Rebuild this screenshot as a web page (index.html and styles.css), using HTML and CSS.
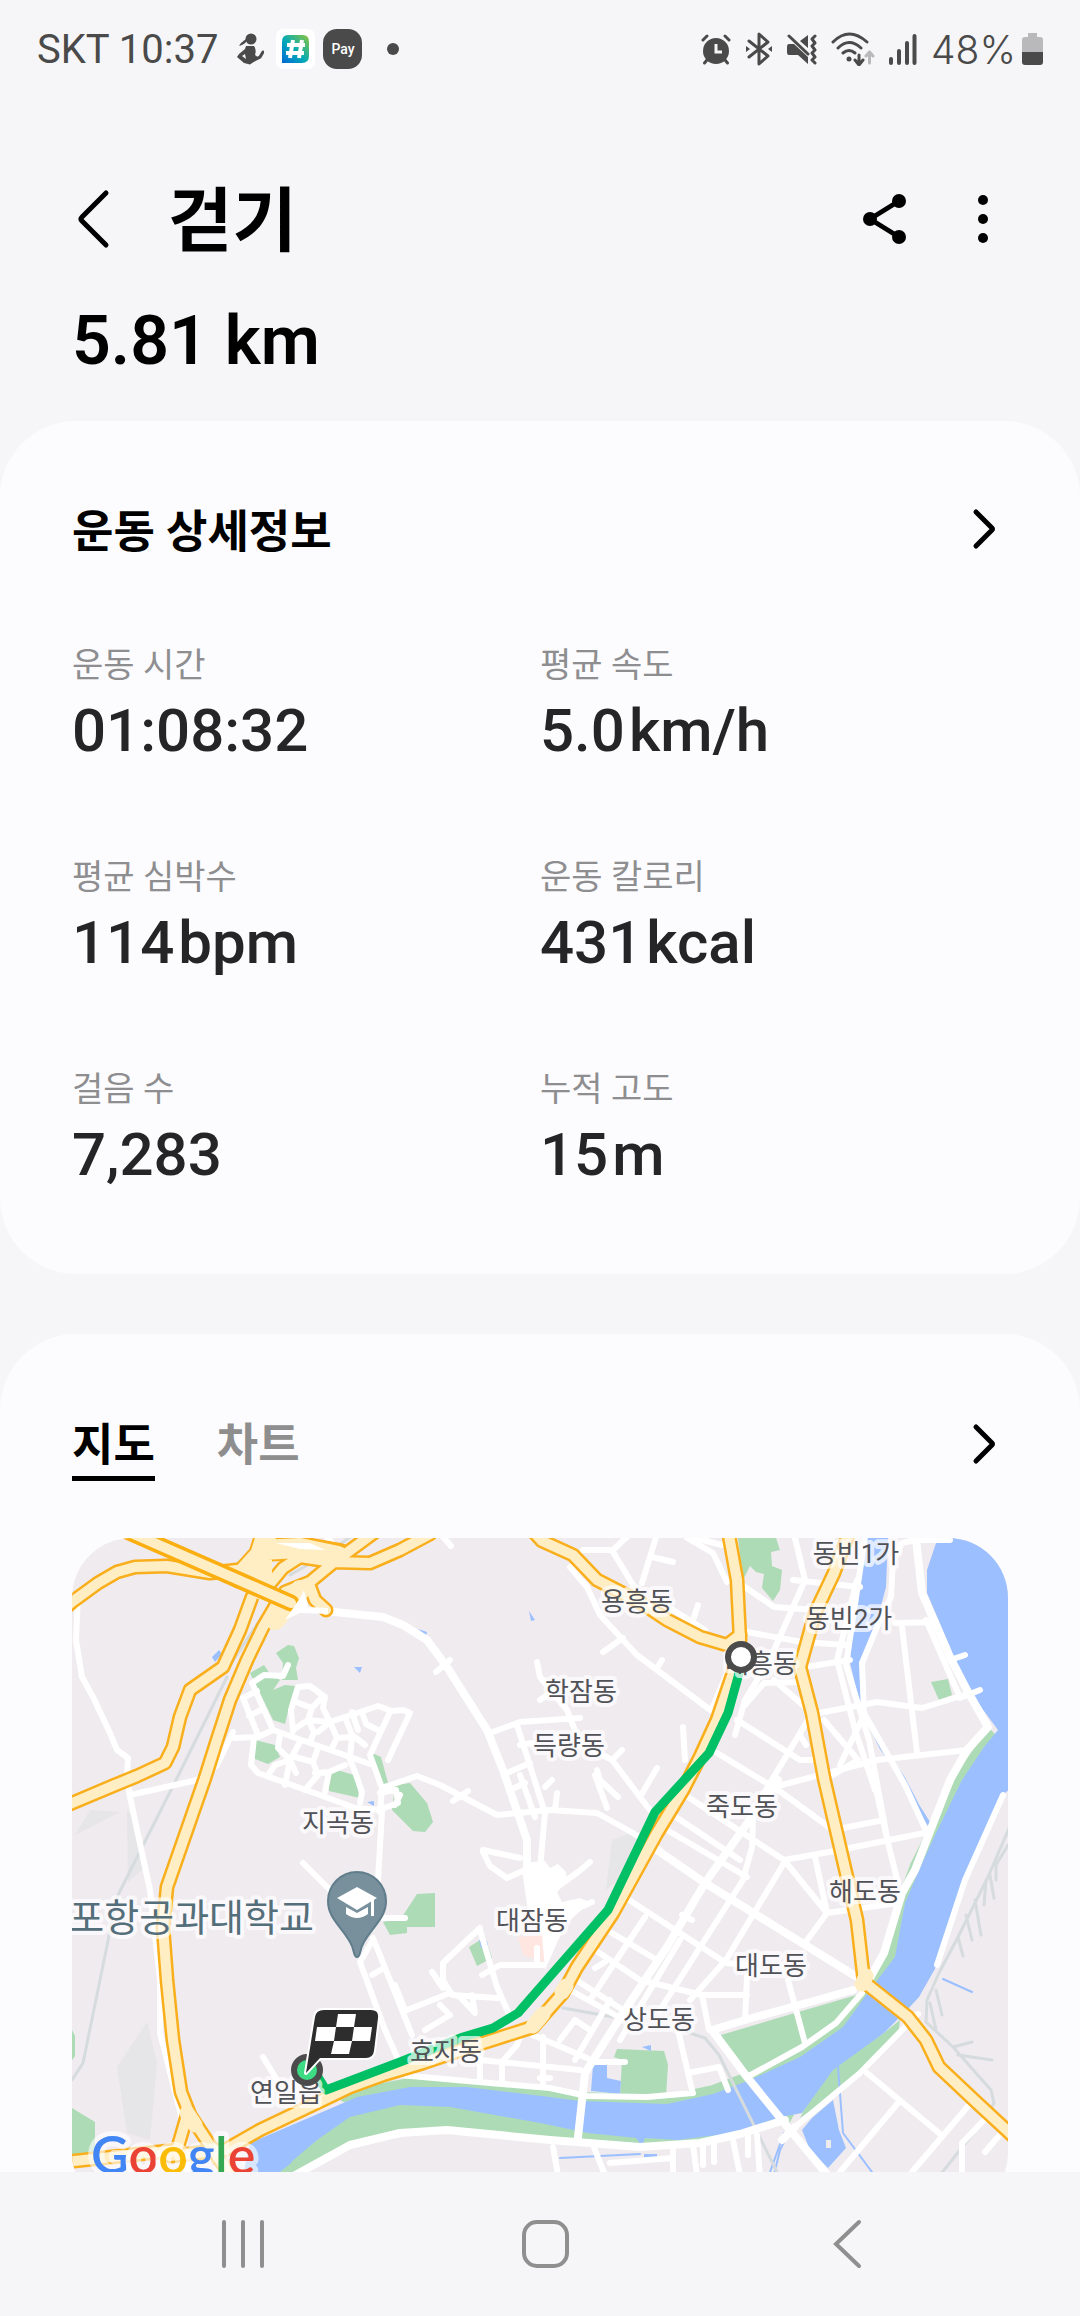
FILE: index.html
```html
<!DOCTYPE html>
<html lang="ko">
<head>
    <meta charset="UTF-8">
    <meta name="viewport" content="width=device-width, initial-scale=1.0">
    <title>걷기</title>
    <link rel="stylesheet" href="styles.css">
</head>
<body>
    <div class="status-bar">
        <div class="status-left">
            <span class="carrier">SKT 10:37</span>
            <svg class="icon-dance" width="28" height="32" viewBox="0 0 28 32">
                <circle cx="15" cy="6" r="5.5"/>
                <path d="M12 6C10 10 7 12 3 13C5 9 8 8 11 5Z"/>
                <path d="M10 13H18C20 16 20 19 19 22L23 25L14 31.500L8 30L1 24L3 21L9 16Z"/>
                <path class="dance-arm" d="M16 28L24 24L27 19"/>
                <path class="dance-gap" d="M6 23L9 21L10 26Z"/>
            </svg>
            <svg class="icon-hash" width="39" height="40" viewBox="0 0 39 40">
                <defs>
                    <linearGradient id="hashColor" x1="0" y1="1" x2="1" y2="0">
                        <stop offset="0" stop-color="#0068d6"/>
                        <stop offset="0.45" stop-color="#00a9b8"/>
                        <stop offset="1" stop-color="#8cc63f"/>
                    </linearGradient>
                </defs>
                <rect width="39" height="40" rx="7" fill="#fff"/>
                <path d="M12 6H27Q33 6 33 13V27Q33 34 26 34H6V13Q6 6 12 6Z" fill="url(#hashColor)"/>
                <path d="M17 11L14 29M26 11L23 29M11 16H29M10 24H28" fill="none" stroke="#fff" stroke-width="4"/>
            </svg>
            <span class="pay-badge">Pay</span>
            <span class="more-dot"></span>
        </div>
        <div class="status-right">
            <svg width="30" height="32" viewBox="0 0 30 32">
                <circle cx="15" cy="18" r="13"/>
                <path class="line" d="M2 7L6 3M28 7L24 3M6 27L3.500 30M24 27L26.500 30"/>
                <path d="M15 11V19H21" fill="none" stroke="#f6f6f8" stroke-width="3"/>
            </svg>
            <svg width="28" height="34" viewBox="0 0 28 34">
                <path class="line" d="M4 9L23 24L14 32V2L23 10L4 25"/>
                <path d="M1 14L5 17L1 20ZM27 14L23 17L27 20Z"/>
            </svg>
            <svg width="30" height="32" viewBox="0 0 30 32">
                <path d="M2 11H7L21 24V31L11 22H2Q0 22 0 19V14Q0 11 2 11ZM13 8L21 2V15Z"/>
                <path class="line" d="M2 3L21 21"/>
                <path class="line" d="M28 3L25 6L28 10L25 13L28 17L25 20L28 24L25 27L28 30"/>
            </svg>
            <svg width="44" height="34" viewBox="0 0 44 34">
                <path class="line" d="M2 10Q18 -6 36 10M7 16Q18 5 30 16M12 21Q18 16 24 21"/>
                <circle cx="18" cy="27" r="2.500"/>
                <path class="line" d="M28 23V32M24 28L28 33L32 28"/>
                <path class="line faint" d="M38.500 31V20M35 24L38.500 20L42 24"/>
            </svg>
            <svg width="28" height="32" viewBox="0 0 28 32">
                <path d="M2 26V30M10 18V30M18 10V30M25.500 3V30" fill="none" stroke="#4a4a4a" stroke-width="4" stroke-linecap="round"/>
            </svg>
            <span class="battery-text">48%</span>
            <svg width="21" height="32" viewBox="0 0 21 32">
                <path class="battery-empty" d="M6 0H15V4H18Q21 4 21 7V20H0V7Q0 4 3 4H6Z"/>
                <path d="M0 19H21V29Q21 32 18 32H3Q0 32 0 29Z"/>
            </svg>
        </div>
    </div>

    <main>
        <header>
            <button class="icon-button" aria-label="뒤로">
                <svg width="60" height="60" viewBox="0 0 60 60"><path class="stroke" d="M42 4L18 28Q16 30 18 32L42 56"/></svg>
            </button>
            <h1>걷기</h1>
            <button class="icon-button" aria-label="공유">
                <svg width="60" height="60" viewBox="0 0 60 60">
                    <path class="stroke" d="M44 12L15 30L44 48"/>
                    <circle cx="15" cy="30" r="7"/>
                    <circle cx="44" cy="12" r="7"/>
                    <circle cx="44" cy="48" r="7"/>
                </svg>
            </button>
            <button class="icon-button" aria-label="더보기">
                <svg width="60" height="60" viewBox="0 0 60 60">
                    <circle cx="30" cy="11" r="5"/>
                    <circle cx="30" cy="30" r="5"/>
                    <circle cx="30" cy="49" r="5"/>
                </svg>
            </button>
        </header>
        <p class="distance">5.81 km</p>

        <section class="card">
            <div class="card-head">
                <h2>운동 상세정보</h2>
                <button class="icon-button" aria-label="상세정보 보기">
                    <svg width="48" height="48" viewBox="0 0 48 48"><path class="stroke" d="M16 6L32 22Q33 23 32 24L16 40"/></svg>
                </button>
            </div>
            <dl class="stats">
                <div>
                    <dt>운동 시간</dt>
                    <dd>01:08:32</dd>
                </div>
                <div>
                    <dt>평균 속도</dt>
                    <dd>5.0<span class="unit">km/h</span></dd>
                </div>
                <div>
                    <dt>평균 심박수</dt>
                    <dd>114<span class="unit">bpm</span></dd>
                </div>
                <div>
                    <dt>운동 칼로리</dt>
                    <dd>431<span class="unit">kcal</span></dd>
                </div>
                <div>
                    <dt>걸음 수</dt>
                    <dd>7,283</dd>
                </div>
                <div>
                    <dt>누적 고도</dt>
                    <dd>15<span class="unit">m</span></dd>
                </div>
            </dl>
        </section>

        <section class="card map-card">
            <div class="card-head">
                <div class="tabs" role="tablist">
                    <button class="tab active" role="tab" aria-selected="true">지도</button>
                    <button class="tab" role="tab" aria-selected="false">차트</button>
                </div>
                <button class="icon-button" aria-label="지도 보기">
                    <svg width="48" height="48" viewBox="0 0 48 48"><path class="stroke" d="M16 5L32 21Q33 22 32 23L16 39"/></svg>
                </button>
            </div>

            <svg class="map" viewBox="72 1538 936 675" role="img" aria-label="걷기 경로 지도">
                <defs>
                    <g id="highways">
                        <path d="M65 1608L72 1602L98 1583L117 1572L135 1567L167 1566L210 1573L237 1570"/>
                        <path d="M252 1597L240 1630L223 1667L190 1690L180 1717L173 1747L165 1763L137 1776L115 1785L65 1806"/>
                        <path d="M277 1603L263 1627L247 1660L230 1700L217 1740L205 1778L167 1887L163 1927L167 1980L173 2040L181 2092L190 2115L213 2150L240 2190"/>
                        <path d="M188 2112L177 2150L65 2162M170 2156L225 2150L260 2130L323 2100L350 2087L383 2075L423 2063L483 2043L533 2027L563 1993L577 1967L613 1913L657 1833L683 1790L700 1757L717 1720L733 1673L740 1640L737 1580L728 1530"/>
                        <path d="M530 1528L542 1541L573 1555L597 1580L640 1602L667 1620L700 1637L727 1645L740 1635"/>
                        <path d="M850 1530L834 1573L815 1613L800 1667L812 1713L824 1778L840 1847L857 1920L864 1982L908 2017L926 2040L939 2067L974 2100L1015 2138"/>
                        <path d="M263 1592L283 1568L300 1557L333 1562L370 1563L400 1550L430 1534M285 1592L310 1582L333 1563L375 1532M309 1584L315 1600L326 1610"/>
                    </g>
                    <path id="river" d="M240 2190L250 2143L327 2110L357 2097L410 2087L467 2087L550 2097L580 2101L667 2104L713 2094L750 2080L800 2057L843 2027L872 1987L895 1957L905 1903L919 1870L936 1833L962 1780L984 1747L998 1730L981 1707L960 1677L950 1647L927 1593L927 1570L936 1543L942 1530H1015V1785L1005 1793L981 1847L953 1910L936 1967L919 1997L907 2010L884 2033L833 2070L802 2113L781 2117L733 2133L678 2140L645 2138L642 2146L636 2138L588 2133L540 2123L450 2107L400 2105L350 2117L317 2140L290 2163L262 2185Z"/>
                </defs>

                <rect class="land" x="72" y="1538" width="936" height="675"/>

                <!-- bare ground -->
                <path class="ground" d="M147 2022L157 2063L150 2140L127 2133L117 2067ZM612 1840L640 1830L618 1880L606 1890ZM127 1810L137 1820L142 1870L128 1882ZM75 1835L90 1810L120 1812Z"/>
                <path class="hospital" d="M518 1937L543 1935L545 1962L523 1955Z"/>

                <!-- parks -->
                <g class="park">
                    <path d="M721 2035L795 2013L860 1994L840 2020L802 2048L750 2075L723 2043Z"/>
                    <path d="M614 2057L617 2049L664 2051L668 2065L666 2096H620L622 2060Z"/>
                    <path d="M900 2020L898 2036L864 2073L800 2118L809 2100L833 2068L884 2033Z"/>
                    <path d="M738 1538H776L780 1550L771 1552L772 1566L782 1570L780 1590L773 1601L762 1588L764 1574L756 1572L750 1566L743 1580Z"/>
                    <path d="M931 1682L948 1679L952 1695L939 1700Z"/>
                    <path d="M989 1728L996 1735L985 1748L962 1782H950Z"/>
                    <path d="M250 1673L264 1665L270 1674L280 1680L273 1690L285 1685L295 1686L290 1703L285 1724L273 1720L257 1687Z"/>
                    <path d="M276 1653L288 1645L294 1646L299 1658L296 1668L298 1680L282 1680L283 1663Z"/>
                    <path d="M255 1740L275 1745L280 1757L268 1764L255 1759Z"/>
                    <path d="M326 1774L337 1770L354 1775L360 1798L329 1791Z"/>
                    <path d="M372 1753L381 1757L388 1783L382 1784Z"/>
                    <path d="M395 1785L410 1783L427 1803L433 1822L425 1832L413 1831L392 1810Z"/>
                    <path d="M402 1917L417 1894L435 1893V1927H407V1933L390 1935L383 1922Z"/>
                    <path d="M469 1947L485 1937L492 1958L477 1966Z"/>
                    <path d="M72 2108L95 2122V2155L72 2158ZM72 2030L75 2036V2056L72 2060Z"/>
                    <path d="M255 2190L330 2110L450 2100L588 2128L800 2104L790 2122L735 2134L690 2142L640 2147L580 2144L450 2130L400 2134L350 2146L300 2175L270 2195Z"/>
                </g>
                <path class="bank" d="M345 2096L410 2084L467 2084L550 2093L580 2098L667 2101L713 2091L750 2077L800 2053L843 2024L872 1987L893 1950L902 1903L916 1866L934 1830L962 1780"/>

                <!-- water -->
                <use class="water" href="#river"/>
                <g class="water">
                    <path d="M866 1538H888L886 1587L874 1633L862 1660L864 1693L868 1720L862 1712L850 1663L853 1627L860 1580Z"/>
                    <path d="M593 2065H607V2078L621 2081L620 2094L591 2091Z"/>
                    <path d="M833 2100L839 2130L846 2148L828 2168L810 2150L802 2130L812 2118Z"/>
                    <path d="M212 1657L219 1650L222 1654L215 1662ZM354 1667H362L360 1673ZM418 1629L427 1632L426 1636ZM529 1611L535 1620L531 1621ZM367 1802L374 1801V1806ZM642 2047L651 2045V2051ZM644 2154H657V2159H644ZM479 1940L487 1941L488 1947L481 1948Z"/>
                </g>
                <path class="inlet" d="M255 2190L290 2162L270 2160L300 2152"/>
                <rect class="land" x="826" y="2140" width="5" height="8"/>
                <path class="stream" d="M866 1715L881 1747L903 1778L917 1805L929 1824"/>
                <path class="stream thin" d="M838 2067L843 2133L872 2172M790 2130L780 2150L774 2175M784 2133L769 2175M943 1979L972 1992M560 2158L640 2154"/>

                <!-- railways -->
                <path class="rail" d="M687 2032L705 2038L719 2055L780 2178M227 1677L177 1778L117 1897L83 2063L72 2080M563 2008L613 2017M1010 1826L988 1877L958 1937L939 1973L927 2000L926 2022L953 2047L991 2090L994 2103L984 2120L940 2175M1008 1845L996 1865V1880M990 1875L994 1898M986 1880L984 1905M975 1900L981 1935M966 1915L972 1940M958 1937L963 1956M936 1990L942 2015M930 2003L936 2030M953 2047L972 2042M958 2055L992 2060M290 1575L325 1555L360 1530M230 1665L270 1605"/>

                <!-- local streets -->
                <g class="street">
                    <path d="M98 1580L78 1593L76 1640L82 1677L93 1697L110 1733L117 1750L128 1758L127 1777L130 1797L150 1890L160 1980V2033L183 2123L187 2170"/>
                    <path d="M130 1795L197 1780L217 1765L233 1732M235 1738L258 1737L273 1730M243 1698L258 1735M243 1698L257 1691M249 1716L261 1710M252 1683L273 1730L330 1750L370 1764M252 1683L264 1675L283 1676L288 1665"/>
                    <path d="M254 1738L251 1765L258 1773L320 1795L355 1808L382 1810M293 1731L291 1710L298 1687L310 1686L325 1697L323 1708L330 1722L378 1706L392 1711L403 1710L410 1713L388 1760M390 1712L370 1755L382 1788L380 1812"/>
                    <path d="M296 1702L312 1708L323 1696M312 1708L308 1720L296 1728M308 1720L314 1732L310 1742M308 1720L330 1722M318 1732L330 1722L337 1738L331 1750M345 1717L352 1735L365 1745M352 1737L350 1757M352 1712L358 1730M362 1712L366 1724L378 1730M337 1738L352 1737"/>
                    <path d="M280 1735L278 1748L290 1760L285 1785M318 1748L313 1762L318 1775L305 1790M290 1760L296 1773M295 1757L313 1762M268 1775L275 1765L290 1760L300 1742M325 1792L329 1772L345 1765M360 1803L362 1792L355 1772L350 1760M315 1773L329 1772"/>
                    <path d="M382 1788L417 1776L440 1785L463 1797L497 1815L550 1810L597 1813L633 1833L660 1850M453 1801L468 1791M382 1812L378 1880M400 1795L395 1805M380 1793L396 1790L398 1803L384 1808"/>
                    <path d="M303 1863L330 1890M383 1918L405 1918M373 1940L360 1962L385 2030L397 2057M373 1938L412 2035M372 1975L384 1968M407 2010L450 1993L460 1997L475 2013L472 1995M480 1928L443 1963V1980L452 1995L497 1998M480 1930L497 1987L508 2012M432 1972L443 1988M482 1975L500 1965L543 1965M425 2030L450 2015L440 2005M263 2057L277 2080M395 1985L405 2010"/>
                    <path d="M490 1733L520 1722L580 1718M517 1725L545 1813L540 1868M507 1773L530 1763M510 1790L525 1783M520 1775L535 1817M520 1745L532 1743M545 1787L552 1780M555 1810L557 1793M537 1662L540 1677L567 1710L580 1743L612 1760L640 1797L650 1810M597 1770L600 1780L618 1797M595 1775L607 1808M640 1797L657 1768M612 1760L622 1750M540 1700L555 1690"/>
                    <path d="M583 1550L613 1550L630 1534M613 1552L633 1585M657 1534L642 1583M652 1557L673 1562M687 1538L713 1553L727 1582M695 1538L722 1545M570 1567L587 1587L600 1615L637 1655L677 1685L713 1712M603 1652L623 1638M657 1668L662 1660M673 1610L705 1630M698 1605L693 1620M683 1727L685 1760M713 1707L727 1673M437 1530L451 1546M436 1672L450 1660M280 1546L310 1543L340 1552L325 1535"/>
                    <path d="M745 1587L774 1607L815 1610M795 1538L805 1580L771 1657L745 1700L735 1735M793 1580L860 1587M747 1632L802 1642L846 1645M866 1530L846 1665L869 1740L888 1843L898 1883M857 1580L837 1660L855 1730L875 1790M950 1540L915 1540L902 1543L893 1560L891 1597L877 1627L862 1663L864 1713L905 1785L928 1835"/>
                    <path d="M895 1623L936 1622M926 1620L958 1693M902 1627L917 1753M819 1713L877 1702L922 1708L964 1695M967 1750L877 1760L774 1787M805 1667L850 1660M800 1682L764 1683L745 1705M774 1680L812 1713M737 1720L800 1760L812 1760M717 1753L773 1787M812 1713L760 1800M824 1720L858 1760L833 1775M864 1715L840 1765M800 1735L806 1745"/>
                    <path d="M688 1797L784 1860L827 1913L805 1943M667 1830L747 1877M676 1817L740 1860M784 1860L840 1850L929 1832M774 1787L833 1830L884 1820M874 1780L888 1843M815 1857L827 1913L898 1903M784 1863L726 1960L690 2000M753 1817L752 1847L743 1880L660 2010M626 1898L726 1963L747 1965M607 1930L657 1960M595 1950L640 1980L702 1995H747M576 1980L623 2010M570 1990L615 2015M645 1917L590 2000M680 1940L620 2040M682 1915L692 1920M595 1968L605 1962M747 1977L745 2020M702 1995L709 2030M788 1980L805 2043"/>
                    <path d="M747 2077L802 2047L836 2023L862 1993M678 2030L692 2090M688 2073L719 2067L728 2090M400 2075L467 2081L550 2088L587 2096L647 2097L693 2093M795 2127L860 2073L905 2027M867 2073L939 2133M898 2103L840 2172M969 2105L912 2172M984 2120L962 2143V2175M1004 2130L985 2152M905 2020L918 2014M1003 1795L965 1880L937 1965M965 1655L950 1660M960 1698L980 1690"/>
                    <path d="M480 2060L580 2070M480 2050V2082M520 2037L517 2045L502 2062V2082M543 2037V2083M533 2035L587 2058M560 2040L575 2020L590 2030M575 2060L610 2000M590 2062H625M553 2147L558 2175M593 2145L605 2175M673 2147V2175M693 2145L697 2175M703 2143V2165M714 2143V2162M733 2140L740 2175M748 2136V2155M757 2135L760 2178M610 2163L673 2158M540 2078H550"/>
                    <path d="M483 1852L490 1866L507 1878L525 1870M483 1850L520 1858M560 1885L578 1872L590 1862M563 1915L592 1902M537 1948V1965"/>
                </g>
                <path class="street-block" d="M522 1870L532 1862L545 1861L550 1868L558 1864L566 1872L567 1882L557 1892L562 1902L580 1898L590 1902L565 1925L545 1970L542 1935L527 1905Z"/>
                <path class="avenue" d="M325 1611L383 1617L403 1625L427 1640L447 1667L487 1730L503 1770L527 1840V1875M657 1850L705 1883L865 1982M778 1780L705 1883L667 1947L623 2013L585 2073L578 2137M712 2030L745 2020L853 1990M712 2030L747 2077L790 2130L830 2178M290 2178L350 2145L400 2133L447 2130L550 2140L640 2147L700 2143L740 2134L785 2120M915 1530L922 1593L950 1657L967 1690L988 1727L967 1750L950 1780L915 1870L902 1893L884 1953L866 1985M782 2140L795 2127"/>

                <use class="highway-case" href="#highways"/>
                <path class="junction-case" d="M268 1530L260 1555L240 1577M262 1550L300 1548L340 1555"/>
                <use class="highway-fill" href="#highways"/>
                <path class="junction-fill" d="M268 1530L260 1555L242 1575M262 1550L300 1548L338 1556M262 1560L262 1590M300 1590L275 1620"/>
                <path class="crossing-fill" d="M862 1984L866 1976M543 2014L533 2026M562 1992L566 1986M187 2113L195 2125"/>
                <path class="bridge-case" d="M120 1528L291 1603"/>
                <path class="bridge-fill" d="M120 1528L291 1603"/>
                <path class="street-block" d="M285 1620L300 1598L304 1590L308 1607L328 1608V1614L300 1613ZM276 1543L310 1543L325 1550L300 1549Z"/>

                <polyline class="route" points="741,1662 738,1677 728,1713 709,1753 655,1812 608,1910 518,2013 493,2028 463,2037 400,2062 326,2090 315,2072"/>

                <!-- university pin -->
                <path class="pin" d="M357 1957C353 1957 355 1950 350 1942C341 1926 328 1918 328 1901A29 29 0 0 1 386 1901C386 1918 373 1926 364 1942C359 1950 361 1957 357 1957Z"/>
                <path d="M337 1898L357 1887L377 1898L357 1910ZM346 1907V1914Q357 1922 368 1914V1907L357 1913ZM371 1900H374V1916H371Z" fill="#fff"/>

                <g class="place">
                    <text x="856" y="1563">동빈1가</text>
                    <text x="849" y="1628">동빈2가</text>
                    <text x="637" y="1611">용흥동</text>
                    <text x="761" y="1673">대흥동</text>
                    <text x="581" y="1701">학잠동</text>
                    <text x="569" y="1755">득량동</text>
                    <text x="742" y="1816">죽도동</text>
                    <text x="338" y="1832">지곡동</text>
                    <text x="865" y="1901">해도동</text>
                    <text x="532" y="1930">대잠동</text>
                    <text x="771" y="1975">대도동</text>
                    <text x="659" y="2029">상도동</text>
                    <text x="446" y="2061">효자동</text>
                    <text x="286" y="2102">연일읍</text>
                </g>
                <text class="campus" x="314" y="1931">포항공과대학교</text>

                <circle class="marker start" cx="741" cy="1657" r="13"/>
                <circle class="marker finish" cx="307" cy="2070" r="13"/>
                <path class="flag" d="M324 2010H371Q379 2010 378 2018L374 2051Q373 2058 366 2058H320L306 2073L315 2017Q316 2010 324 2010Z"/>
                <path d="M338 2014H356L354 2027H336ZM317 2027H336L334 2041H315ZM354 2027H372L370 2041H352ZM334 2041H352L349 2054H331Z" fill="#fff"/>

                <text class="google" x="91" y="2174"><tspan fill="#4285f4">G</tspan><tspan fill="#ea4335">o</tspan><tspan fill="#fbbc05">o</tspan><tspan fill="#4285f4">g</tspan><tspan fill="#34a853">l</tspan><tspan fill="#ea4335">e</tspan></text>
            </svg>
        </section>
    </main>

    <nav class="nav-bar">
        <button aria-label="최근 앱">
            <svg width="50" height="50" viewBox="0 0 50 50"><path d="M6 3V47M25 3V47M44 3V47"/></svg>
        </button>
        <button aria-label="홈">
            <svg width="50" height="50" viewBox="0 0 50 50"><rect x="4" y="3" width="43" height="44" rx="13"/></svg>
        </button>
        <button aria-label="이전">
            <svg width="50" height="50" viewBox="0 0 50 50"><path d="M37 3L14 25L37 47"/></svg>
        </button>
    </nav>
</body>
</html>
```

FILE: styles.css
```css
* {
    box-sizing: border-box;
}

body {
    margin: 0;
    height: 100vh;
    display: flex;
    flex-direction: column;
    font-family: Roboto, "Noto Sans CJK KR", sans-serif;
    background-color: #f6f6f8;
    color: #000;
}

h1, h2, p, dl, dd {
    margin: 0;
}

button {
    padding: 0;
    border: none;
    background: none;
    font-family: inherit;
    cursor: pointer;
}

svg {
    display: block;
}

/* Status bar */
.status-bar {
    flex: none;
    display: flex;
    justify-content: space-between;
    align-items: center;
    height: 98px;
    padding: 0 37px;
    font-size: 40px;
    color: #4a4a4a;
}

.status-left,
.status-right {
    display: flex;
    align-items: center;
}

.status-left {
    gap: 8px;
}

.status-right {
    gap: 14px;
}

.status-bar svg {
    fill: #4a4a4a;
}

.status-bar .line {
    fill: none;
    stroke: #4a4a4a;
    stroke-width: 3;
    stroke-linecap: round;
    stroke-linejoin: round;
}

.status-bar .faint {
    stroke: #b9b9bb;
}

.icon-dance {
    margin: 0 4px 0 10px;
}

.dance-arm {
    fill: none;
    stroke: #4a4a4a;
    stroke-width: 3;
    stroke-linecap: round;
}

.dance-gap {
    fill: #f6f6f8;
}

.pay-badge {
    width: 39px;
    height: 40px;
    border-radius: 14px;
    background-color: #4a4a4a;
    color: #fff;
    font-size: 14px;
    font-weight: 500;
    line-height: 40px;
    text-align: center;
}

.more-dot {
    width: 12px;
    height: 12px;
    margin-left: 17px;
    border-radius: 50%;
    background-color: #4a4a4a;
}

.battery-text {
    margin-right: -8px;
    font-family: Inter, sans-serif;
    font-size: 39px;
    font-weight: 300;
}

.status-bar .battery-empty {
    fill: #b9b9bb;
}

/* Page */
main {
    flex: 1;
    min-height: 0;
    overflow: hidden;
}

header {
    display: flex;
    align-items: center;
    gap: 38px;
    padding: 71px 67px 32px 64px;
}

h1 {
    flex: 1;
    margin-left: 6px;
    padding-top: 6px;
    font-size: 70px;
    line-height: 94px;
    font-weight: 700;
}

.icon-button .stroke {
    fill: none;
    stroke: #000;
    stroke-width: 5;
    stroke-linecap: round;
    stroke-linejoin: round;
}

.distance {
    padding: 0 72px;
    margin-bottom: 40px;
    font-size: 68px;
    line-height: 80px;
    font-weight: 600;
}

.card {
    padding: 76px 72px 79px;
    margin-bottom: 60px;
    border-radius: 76px;
    background-color: #fcfcfe;
}

.card-head {
    display: flex;
    justify-content: space-between;
    align-items: center;
}

h2 {
    padding-top: 6px;
    font-size: 45px;
    line-height: 60px;
    font-weight: 700;
}

.stats {
    display: grid;
    grid-template-columns: 1fr 1fr;
    row-gap: 82px;
    margin-top: 78px;
}

dt {
    font-size: 34px;
    line-height: 48px;
    color: #8e8e90;
}

dd {
    margin-top: 2px;
    font-size: 60px;
    line-height: 80px;
    font-weight: 500;
    color: #252528;
}

.unit {
    margin-left: 4px;
}

.tabs {
    display: flex;
    gap: 62px;
}

.tab {
    padding-top: 6px;
    border-bottom: 5px solid transparent;
    font-size: 45px;
    line-height: 60px;
    font-weight: 700;
    color: #8e8e8e;
}

.tab.active {
    border-color: #000;
    color: #000;
}

/* Map */
.map {
    width: 100%;
    margin-top: 57px;
    border-radius: 60px;
    overflow: hidden;
    fill: none;
    stroke-linecap: round;
    stroke-linejoin: round;
}

.land { fill: #efebef; }
.ground { fill: #e6e5e7; }
.hospital { fill: #ffe6e1; }
.park { fill: #addbb6; }
.water { fill: #9cc0ff; }

.bank {
    stroke: #addbb6;
    stroke-width: 12;
}

.inlet {
    stroke: #9cc0ff;
    stroke-width: 3;
}

.stream {
    stroke: #9cc0ff;
    stroke-width: 4;
}

.stream.thin {
    stroke-width: 2;
}

.rail {
    stroke: #d6dbdd;
    stroke-width: 3;
}

.street {
    stroke: #fff;
    stroke-width: 6;
}

.street-block {
    fill: #fff;
}

.avenue {
    stroke: #fff;
    stroke-width: 8;
}

.highway-case {
    stroke: #f9ae1c;
    stroke-width: 15;
}

.highway-fill {
    stroke: #ffeec4;
    stroke-width: 10;
}

.junction-case {
    stroke: #f9ae1c;
    stroke-width: 24;
}

.junction-fill {
    stroke: #ffeec4;
    stroke-width: 20;
}

.crossing-fill {
    stroke: #ffeec4;
    stroke-width: 15;
}

.bridge-case {
    stroke: #fbae10;
    stroke-width: 17;
}

.bridge-fill {
    stroke: #ffeec4;
    stroke-width: 10;
}

.route {
    stroke: #00bf65;
    stroke-width: 9;
    stroke-linecap: butt;
}

.pin {
    fill: #788f9c;
    stroke: #607d8b;
    stroke-width: 2;
}

.place,
.campus {
    paint-order: stroke;
    stroke: rgba(255, 255, 255, 0.7);
    stroke-width: 8;
}

.place {
    fill: #505257;
    font-size: 26px;
    text-anchor: middle;
}

.campus {
    fill: #546e7a;
    font-size: 38px;
    text-anchor: end;
}

.marker {
    stroke: #4b4b4b;
    stroke-width: 6;
}

.start {
    fill: #fff;
}

.finish {
    fill: #3ddc84;
}

.flag {
    paint-order: stroke;
    fill: #2d2d2d;
    stroke: #fff;
    stroke-width: 4;
}

.google {
    font-family: Lato, sans-serif;
    font-size: 52px;
    font-weight: 600;
    paint-order: stroke;
    stroke: rgba(255, 255, 255, 0.6);
    stroke-width: 10;
}

/* Bottom navigation */
.nav-bar {
    flex: none;
    display: grid;
    grid-template-columns: repeat(3, 1fr);
    justify-items: center;
    align-items: center;
    height: 144px;
    padding: 0 82px 0 92px;
    background-color: #f6f6f8;
}

.nav-bar svg {
    fill: none;
    stroke: #8f8f8f;
    stroke-width: 4;
    stroke-linecap: round;
}
```
